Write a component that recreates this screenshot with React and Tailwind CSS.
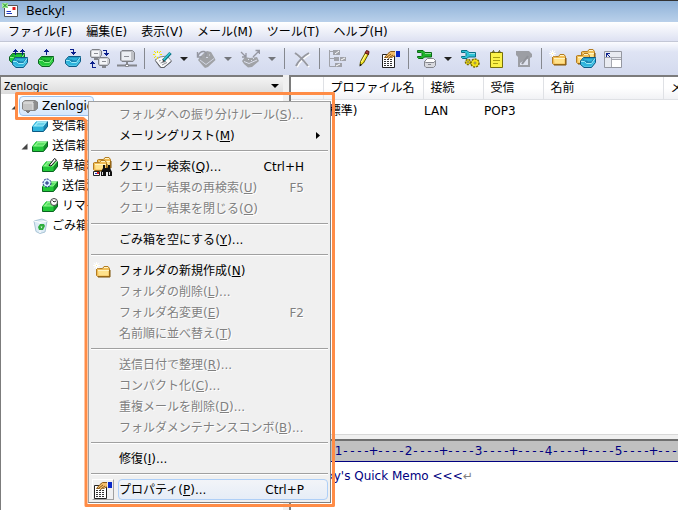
import { useState } from 'react'
import clsx from 'clsx'

const menuBar = [
  ['ファイル', 'F'],
  ['編集', 'E'],
  ['表示', 'V'],
  ['メール', 'M'],
  ['ツール', 'T'],
  ['ヘルプ', 'H'],
]

/* ================= アイコン部品 ================= */

const BLUE = { top: '#9ceaf8', mid: '#2fb4dc', in: '#1a83b0', dark: '#0c5a86' }
const GREEN = { top: '#8af58a', mid: '#22c83a', in: '#14912a', dark: '#0a6420' }

function Svg({ size = 20, children }) {
  return (
    <svg width={size} height={size} viewBox={`0 0 ${size} ${size}`} aria-hidden="true">
      {children}
    </svg>
  )
}

// 口の開いたトレイ
function Tray({ x = 0, y = 0, c }) {
  return (
    <g transform={`translate(${x} ${y})`}>
      <path d="M3.5.5H15.5V5.5L11.5 10.5H4L.5 7.5V4Z" fill={c.mid} stroke={c.dark} />
      <path d="M4 1.5H14.5L11.5 6H6.5L5 4.5H2Z" fill={c.in} />
      <path d="M4.5 2H13L11.5 4.5H8L7 3.5H3.5Z" fill={c.mid} />
      <path d="M1 4.5H4.5L6.5 6.5H11.5L15 1.5" fill="none" stroke={c.top} />
      <path d="M1.5 7 4.5 9.5H11L14.5 5" fill="none" stroke={c.top} opacity=".35" />
    </g>
  )
}

// 閉じた箱 (ツリー用)
function Box({ c, children }) {
  return (
    <Svg size={16}>
      <path d="M4.5 3.5H15.5V8.5L11.5 13.5H.5V8.5Z" fill={c.mid} />
      <path d="M5 4H15L11.5 8.5H1Z" fill={c.top} />
      <path d="M6 5H13L11 7.5H4Z" fill={c.mid} opacity=".45" />
      <path d="M11.5 8.5 15.5 3.5V8.5L11.5 13.5Z" fill={c.in} />
      <path d="M.5 8.5V13.5H11.5L15.5 8.5V3.5" fill="none" stroke={c.dark} />
      <path d="M4.5 3.5 .5 8.5" stroke={c.mid} />
      {children}
    </Svg>
  )
}

function ArrowUp({ x, y }) {
  return <path transform={`translate(${x} ${y})`} d="M2 0H3V1H4V2H5V3H3V6H2V3H0V2H1V1H2Z" fill="#0a1f8c" />
}

function ArrowIn({ x, y }) {
  return <path transform={`translate(${x} ${y})`} d="M0 0H4V3H6V4H5V5H4V6H3V5H2V4H1V3H3V1H0Z" fill="#0a1f8c" />
}

function Computer({ x = 0, y = 0 }) {
  return (
    <g transform={`translate(${x} ${y})`}>
      <path d="M2 .5H9.5L11.5 2V6L9.5 8.5H1.5L.5 7V2Z" fill="#cfd1d6" stroke="#7f8187" />
      <path d="M2 2H9V7H2Z" fill="#f4f5f8" />
      <path d="M4 4.5H8" stroke="#8b8d94" />
      <path d="M4 9H8V11H4Z" fill="#85878e" />
    </g>
  )
}

function Sparkle({ x = 0, y = 0, fill = '#fff' }) {
  return (
    <path
      transform={`translate(${x} ${y})`}
      d="M3 0H4V2.3L6 .6 6.5 1.1 4.8 3H7V4H4.8L6.5 6 6 6.5 4 4.8V7H3V4.8L1 6.5.5 6 2.3 4H0V3H2.3L.5 1.1 1 .6 3 2.3Z"
      fill={fill}
    />
  )
}

function Folder({ x = 0, y = 0 }) {
  return (
    <g transform={`translate(${x} ${y})`}>
      <path d="M.5 9.5V3L1.5 2.5H6.5L8 .5H12L13.5 2.5V10.5H1.5Z" fill="#f0bd55" stroke="#b37c22" />
      <path d="M2 4.5H12.5V9.5H2.5Z" fill="#ffe28c" />
      <path d="M2 4.5H13M8 1.5H12" stroke="#fff4c4" />
      <path d="M14 4V11H2" fill="none" stroke="#7d5208" />
    </g>
  )
}

function NewFolderIcon() {
  return (
    <Svg>
      <Folder x={3} y={5} />
      <Sparkle x={0} y={1} />
      <path d="M3 4H4V5H3Z" fill="#fff3a0" />
    </Svg>
  )
}

function WriteIcon() {
  return (
    <Svg>
      <path d="M3 11 8 8 15 7 19.5 12 12 18.5 8 18.5Z" fill="#fafafa" stroke="#85878c" />
      <path d="M4 12.5 9 18.5H12L19.5 12.5" fill="none" stroke="#606268" />
      <path d="M7 12 8.5 11.5M8.5 14 14 12.5M10 16 15 13.5M10 10.5 12 10" stroke="#8d8f96" />
      <path d="M11.5 11.5 18.5 4" stroke="#06707f" strokeWidth="3.2" />
      <path d="M11.5 11 18 4" stroke="#35cbd8" strokeWidth="1.4" />
      <path d="M11 10.5 13 12.5 10.5 13Z" fill="#333" />
      <path d="M5 2H6V4H5ZM5 8H6V10H5ZM1 5H3V6H1ZM8 5H10V6H8ZM2 2H3V3H2ZM3 3H4V4H3ZM8 2H9V3H8ZM7 3H8V4H7ZM2 8H3V9H2ZM3 7H4V8H3Z" fill="#f5e800" />
      <path d="M4 4H7V7H4Z" fill="#ffffc8" />
    </Svg>
  )
}

function ReplyGrayIcon() {
  return (
    <Svg>
      <path d="M8 4 11 2 15 3 18 8 19.5 11 12 18 9 19 7 17 2 11 4 8Z" fill="#a0a2a6" />
      <path d="M1.5 3V8H6M2 7Q4 2 8 2.5 12 4 9 7.5" fill="none" stroke="#9496a0" strokeWidth="1.4" />
      <path d="M4 11 10 15.5 18 9.5M10 8.5H12M13 6H14" fill="none" stroke="#d3d7e4" />
    </Svg>
  )
}

function ForwardGrayIcon() {
  return (
    <Svg>
      <path d="M2 12 5 8 10 9 17 8 19 12 12 18 8 18.5 4 15Z" fill="#a0a2a6" />
      <path d="M1 3 6 8M6 4V8H2M13 8 19 2M15.5 1.5H19.5V5" fill="none" stroke="#9496a0" strokeWidth="1.3" />
      <path d="M4 12.5 9 14.5 17 11M8 10.5H9M11 11.5H12M13 9.5H14" fill="none" stroke="#dde1ee" />
    </Svg>
  )
}

function PropertiesIcon() {
  return (
    <Svg>
      <path d="M1.5 5.5H13.5V18.5H1.5Z" fill="#fff" stroke="#222" />
      <path d="M3 10.5H12M3 12.5H12M3 14.5H12M3 16.5H12" stroke="#333" strokeDasharray="2 1" />
      <path d="M3.5 8.5 7 4.5 9.5 2.5 15 2.5V6.5L12 7.5 10.5 9 9.5 8 7.5 9.5 6.5 8.5Z" fill="#f3bd6a" stroke="#8a5a18" />
      <path d="M6 8 10 5M8.5 8.5 12 6" stroke="#8a5a18" />
      <path d="M15 2H19V8H15Z" fill="#0828c8" />
      <path d="M14.5 2V7" stroke="#e8e8e8" />
    </Svg>
  )
}

function Wrench({ fill, dark }) {
  return (
    <g>
      <path d="M1.5 1.5H7L9 3.5H15.5V8H8.5L7 9.5H2.5L1.5 8.5V7.5H5L6 6.5V4.5L5 3.5H1.5Z" fill={fill} stroke={dark} />
      <path d="M9 4.5H15" stroke="#fff" opacity=".5" />
    </g>
  )
}

function Drum() {
  return (
    <g>
      <path d="M8.5 12.5V17L10 18.5H17.5L19.5 16.5V11.5Z" fill="#d8d9de" stroke="#85878e" />
      <path d="M8.5 12.5 11.5 9.5H17.5L19.5 11.5 18 13.5H10Z" fill="#fff" stroke="#85878e" />
      <path d="M12 15.5H15" stroke="#85878e" />
    </g>
  )
}

function Gear({ cx, cy, r }) {
  return (
    <g>
      <circle cx={cx} cy={cy} r={r} fill="#f5e31c" stroke="#7a6c00" strokeWidth="1.5" strokeDasharray="2 1" />
      <circle cx={cx} cy={cy} r={r - 1} fill="#f5e31c" />
      <circle cx={cx} cy={cy} r="1" fill="#fff" stroke="#7a6c00" strokeWidth=".8" />
    </g>
  )
}

function QuerySearchIcon() {
  return (
    <Svg>
      <Folder x={4} y={0} />
      <Folder x={0} y={3} />
      <path d="M.5 14.5H6.5V18.5H.5Z" fill="#fff" stroke="#222" />
      <path d="M2 16.5H4" stroke="#1530c8" />
      <path d="M4 15H6V17H4Z" fill="#e02020" />
      <path d="M10 8H12V11H15V8H17V11L19 15V19H15V15H13V19H8V15L10 11Z" fill="#111" />
      <path d="M9.5 15V18M16.5 15V18" stroke="#ddd" />
    </Svg>
  )
}

/* ================= ツールバー ================= */

const tools = [
  {
    name: '送受信',
    icon: (
      <Svg>
        <Tray x={0} y={4} c={GREEN} />
        <Tray x={3} y={8} c={BLUE} />
        <ArrowUp x={4} y={0} />
        <ArrowUp x={11} y={0} />
      </Svg>
    ),
  },
  {
    name: '送信',
    icon: (
      <Svg>
        <Tray x={2} y={7} c={GREEN} />
        <ArrowUp x={8} y={0} />
      </Svg>
    ),
  },
  {
    name: '受信',
    icon: (
      <Svg>
        <Tray x={2} y={7} c={BLUE} />
        <ArrowIn x={7} y={0} />
      </Svg>
    ),
  },
  {
    name: '全受信',
    icon: (
      <Svg>
        <Computer x={0} y={0} />
        <Computer x={8} y={8} />
        <ArrowIn x={13} y={1} />
        <path d="M3 13H4V14H5V15H3V18H6V19H2V15H0V14H1V13H2V12H3Z" fill="#0a1f8c" />
      </Svg>
    ),
  },
  {
    name: '接続',
    icon: (
      <Svg>
        <path d="M5 1.5H15.5L17.5 3.5V10.5L16 12.5H5L3.5 11V3Z" fill="#bfc1c6" stroke="#808288" />
        <path d="M5 3H14V11H5Z" fill="#eceef2" />
        <path d="M7 7.5H12" stroke="#8b8d94" />
        <path d="M10 13V15M0 16.5H20" stroke="#84868c" strokeWidth="2" />
        <path d="M8.5 15.5H11.5V17.5H8.5Z" fill="#fff" stroke="#84868c" />
      </Svg>
    ),
  },
  'sep',
  { name: '新規作成', icon: <WriteIcon />, drop: 'on' },
  { name: '返信', icon: <ReplyGrayIcon />, drop: 'off' },
  { name: '転送', icon: <ForwardGrayIcon />, drop: 'off' },
  'sep',
  {
    name: '削除',
    icon: (
      <Svg>
        <path d="M3 4Q9 8 16 17M17 4Q8 9 4 17" fill="none" stroke="#fff" strokeWidth="2" transform="translate(1 1)" />
        <path d="M3 4Q9 8 16 17M17 4Q8 9 4 17" fill="none" stroke="#9799a1" strokeWidth="2" />
      </Svg>
    ),
  },
  'sep',
  {
    name: 'スレッド',
    icon: (
      <Svg>
        <path d="M2.5 1V17.5H9M2.5 9.5H8M2.5 2.5H6" fill="none" stroke="#a0a2a9" />
        <path d="M6 1H13V6H6ZM7 8H12V12H7ZM13 8H19V12H13ZM8 14H15V18H8Z" fill="#a0a2a9" />
        <path d="M8 5 12 2M14 11 18 9M9 17 13 15" stroke="#fff" />
      </Svg>
    ),
  },
  {
    name: '編集',
    icon: (
      <Svg>
        <path d="M6 16.5 6.5 12.5 11.5 3.5 14.5 5 9.5 14Z" fill="#f5e620" stroke="#5c5400" />
        <path d="M11 4 12.5 1.5 15 2.5 14.5 5.5Z" fill="#b04040" stroke="#5a1010" />
        <path d="M7.5 13 12 5" stroke="#fffbb0" />
        <path d="M5.5 17.5 6 15 8 16Z" fill="#111" />
      </Svg>
    ),
  },
  { name: 'プロパティ', icon: <PropertiesIcon /> },
  'sep',
  {
    name: 'メールボックスの設定',
    drop: 'on',
    icon: (
      <Svg>
        <Wrench fill="#1fb52c" dark="#0b6b16" />
        <Drum />
      </Svg>
    ),
  },
  {
    name: '全般的な設定',
    icon: (
      <Svg>
        <Wrench fill="#2fc3d6" dark="#0b6f86" />
        <Gear cx={8} cy={13} r={2.5} />
        <Gear cx={15} cy={14} r={4} />
      </Svg>
    ),
  },
  {
    name: 'メモ',
    icon: (
      <Svg>
        <path d="M3.5 3.5H15.5V18.5H3.5Z" fill="#fbf24a" stroke="#77700a" />
        <path d="M6 8.5H13M6 11.5H13M6 14.5H11" stroke="#a89f10" />
        <path d="M5 4 6.5 1.5 7.5 4M11 4 12.5 1.5 13.5 4" fill="none" stroke="#55521a" />
      </Svg>
    ),
  },
  {
    name: 'メモの編集',
    icon: (
      <Svg>
        <path d="M2 2H15L18 5V8L16 9V18H4V8L2 6Z" fill="#9c9ea4" />
        <path d="M6 16V14L13 10H14V16Z" fill="#dfe3ef" />
        <path d="M8 15 14 7" stroke="#909299" strokeWidth="2" />
      </Svg>
    ),
  },
  'sep',
  { name: '新規フォルダ', icon: <NewFolderIcon /> },
  {
    name: 'フォルダの受信箱',
    icon: (
      <Svg>
        <Folder x={5} y={0} />
        <Folder x={0} y={4} />
        <Tray x={4} y={8} c={BLUE} />
      </Svg>
    ),
  },
  {
    name: 'ウィンドウ',
    icon: (
      <Svg>
        <path d="M1.5 2.5H18.5V18.5H1.5Z" fill="#e9ebf1" stroke="#9497a0" />
        <path d="M2 8.5H18M8.5 9V18" stroke="#a6a8b0" />
        <path d="M9 11H18V18H9Z" fill="#fff" />
        <path d="M9 10.5H18" stroke="#a6a8b0" />
        <path d="M3 4H7V5H5V6H6V7H7V8H6V7H5V6H4V8H3Z" fill="#0a1f8c" />
      </Svg>
    ),
  },
]

function ToolBar() {
  return (
    <div role="toolbar" className="flex h-[33px] shrink-0 items-center overflow-hidden bg-linear-to-b from-[#fbfcff] via-[#dfe4f4] via-30% to-[#d3daee] pl-[5px]">
      {tools.map((t, i) =>
        t === 'sep' ? (
          <div key={i} className="flex w-2 shrink-0 justify-center">
            <div className="h-[21px] w-px bg-[#85888f]" />
          </div>
        ) : (
          <div key={i} className="flex shrink-0">
            <button type="button" aria-label={t.name} disabled={t.drop === 'off'} className="flex h-6 w-[27px] items-center justify-center">
              {t.icon}
            </button>
            {t.drop && (
              <button type="button" aria-label={`${t.name}のメニュー`} disabled={t.drop === 'off'} className="flex w-[17px] items-center justify-center">
                <svg width="8" height="4" viewBox="0 0 8 4" aria-hidden="true">
                  <path d="M0 0H8L4 4Z" fill={t.drop === 'on' ? '#222' : '#74767c'} />
                </svg>
              </button>
            )}
          </div>
        )
      )}
    </div>
  )
}

/* ================= フォルダツリー ================= */

const folders = [
  {
    name: 'Zenlogic',
    level: 0,
    open: true,
    icon: (
      <Svg size={16}>
        <path d="M3 2.5H13L15.5 4V10.5L13 12.5H2.5L.5 11V4.5Z" fill="#8e8e8e" stroke="#858585" />
        <path d="M1 4.5 3 3H12L11 4.5V12H2L1 11Z" fill="#c4c4c4" />
        <path d="M1.5 5H11V12" fill="none" stroke="#e6e6e6" />
        <path d="M4 13H8V14H7V15H5V14H4Z" fill="#777" />
      </Svg>
    ),
  },
  { name: '受信箱', level: 1, icon: <Box c={BLUE} /> },
  { name: '送信箱', level: 1, open: true, icon: <Box c={GREEN} /> },
  {
    name: '草稿箱',
    level: 2,
    icon: (
      <Box c={GREEN}>
        <path d="M7 7.5 12.5 .5 14.5 2 9 8Z" fill="#fff" stroke="#111" />
      </Box>
    ),
  },
  {
    name: '送信済み',
    level: 2,
    icon: (
      <Box c={GREEN}>
        <circle cx="5" cy="5" r="4" fill="#d6f3ff" stroke="#12207c" strokeDasharray="2 1" />
        <path d="M3 5H7M5 3V7" stroke="#12207c" />
      </Box>
    ),
  },
  {
    name: 'リマインダ',
    level: 2,
    icon: (
      <Box c={GREEN}>
        <circle cx="12" cy="4" r="3.5" fill="#fff" stroke="#444" />
        <path d="M10.5 2.5 12 4 14 3" fill="none" stroke="#222" />
      </Box>
    ),
  },
  {
    name: 'ごみ箱',
    level: 1,
    icon: (
      <Svg size={16}>
        <path d="M2 3 10 1 15 3 13 14 8 15.5 4 13.5Z" fill="#dcebf5" stroke="#a9c4d6" />
        <path d="M2 3 8 4.5 15 3M8 4.5V15" fill="none" stroke="#fff" />
        <path d="M8 6H12L13 8 11 12H7L6 9Z" fill="#2fae3f" />
        <path d="M8.5 8.5H10.5L9.5 10.5Z" fill="#e7f7ea" />
      </Svg>
    ),
  },
]

function FolderTree() {
  return (
    <ul role="tree" className="flex-1 overflow-hidden bg-white py-0.5">
      {folders.map(f => (
        <li
          key={f.name}
          role="treeitem"
          aria-selected={f.level === 0}
          className={clsx('flex h-5 items-center', f.level === 0 && 'pl-2', f.level === 1 && 'pl-[18px]', f.level === 2 && 'pl-7')}
        >
          <span className="w-2.5 shrink-0">
            {f.open && (
              <svg width="7" height="7" viewBox="0 0 7 7" className="ml-0.5" aria-hidden="true">
                <path d="M6.5.5V6.5H.5Z" fill="#444" />
              </svg>
            )}
          </span>
          <span
            className={clsx(
              'flex h-5 items-center gap-1 whitespace-nowrap border pl-0.5',
              f.level === 0 ? 'rounded-sm border-[#9cc3ee] bg-linear-to-b from-[#f2f8ff] to-[#d5e7fb]' : 'border-transparent'
            )}
          >
            {f.icon}
            {f.name}
          </span>
        </li>
      ))}
    </ul>
  )
}

/* ================= 右ペイン ================= */

function ProfileTable() {
  const columns = [
    ['', 'w-8'],
    ['プロファイル名', 'w-[100px]'],
    ['接続', 'w-[60px]'],
    ['受信', 'w-[60px]'],
    ['名前', 'w-[120px]'],
    ['メールアドレス', 'w-[160px]'],
  ]
  return (
    <div className="flex-1 overflow-hidden border-b border-[#d8d8d8] bg-white">
      <table className="w-[532px] table-fixed text-left whitespace-nowrap">
        <thead>
          <tr className="h-[22px] bg-linear-to-b from-white from-50% to-[#f1f2f5]">
            {columns.map(([label, width]) => (
              <th key={width + label} scope="col" className={clsx(width, 'border-r border-b border-[#dfe1e5] pl-[7px] font-normal')}>
                {label}
              </th>
            ))}
          </tr>
        </thead>
        <tbody>
          <tr className="h-[23px]">
            <td />
            <td className="pl-px">(標準)</td>
            <td className="pl-px">LAN</td>
            <td className="pl-px">POP3</td>
            <td />
            <td />
          </tr>
        </tbody>
      </table>
    </div>
  )
}

function QuickMemo() {
  return (
    <div className="shrink-0 border-t-2 border-[#6f6f6f] bg-white text-[#000080]">
      <div className="flex h-[21px] items-center overflow-hidden border-b border-[#000080] bg-[#c0c0c0] pl-11">
        {[1, 2, 3, 4, 5].map(n => (
          <div key={n} className="flex w-[70px] shrink-0">
            {`${n}----+----`.split('').map((ch, i) => (
              <span key={i} className="flex w-[7px] justify-center">
                {ch}
              </span>
            ))}
          </div>
        ))}
      </div>
      <div className="h-12 pt-1 pl-3.5 leading-5">
        Becky's Quick Memo &lt;&lt;&lt;<span className="text-[#808080]">↵</span>
      </div>
    </div>
  )
}

/* ================= コンテキストメニュー ================= */

const contextMenu = [
  [
    { text: 'フォルダへの振り分けルール', k: 'S', dots: true, off: true },
    { text: 'メーリングリスト', k: 'M', sub: true },
  ],
  [
    { text: 'クエリー検索', k: 'Q', dots: true, key: 'Ctrl+H', icon: <QuerySearchIcon /> },
    { text: 'クエリー結果の再検索', k: 'U', key: 'F5', off: true },
    { text: 'クエリー結果を閉じる', k: 'O', off: true },
  ],
  [{ text: 'ごみ箱を空にする', k: 'Y', dots: true }],
  [
    { text: 'フォルダの新規作成', k: 'N', icon: <NewFolderIcon /> },
    { text: 'フォルダの削除', k: 'L', dots: true, off: true },
    { text: 'フォルダ名変更', k: 'E', key: 'F2', off: true },
    { text: '名前順に並べ替え', k: 'T', off: true },
  ],
  [
    { text: '送信日付で整理', k: 'R', dots: true, off: true },
    { text: 'コンパクト化', k: 'C', dots: true, off: true },
    { text: '重複メールを削除', k: 'D', dots: true, off: true },
    { text: 'フォルダメンテナンスコンボ', k: 'B', dots: true, off: true },
  ],
  [{ text: '修復', k: 'I', dots: true }],
  [{ text: 'プロパティ', k: 'P', dots: true, key: 'Ctrl+P', icon: <PropertiesIcon />, active: true }],
]

function MenuItem({ item }) {
  return (
    <button
      type="button"
      role="menuitem"
      disabled={item.off}
      className={clsx('flex h-[21px] w-full items-center whitespace-nowrap', item.off ? 'text-[#808080] [text-shadow:1px_1px_0_#fff]' : 'text-black')}
    >
      <span
        className={clsx(
          'mr-1 ml-px flex h-[21px] w-[22px] shrink-0 items-center justify-center border',
          item.active ? 'border-t-white border-r-[#a0a0a0] border-b-[#a0a0a0] border-l-white' : 'border-transparent'
        )}
      >
        {item.icon}
      </span>
      <span
        className={clsx(
          'flex h-full flex-1 items-center rounded-sm border pr-[23px]',
          item.active ? 'border-[#aecff7] bg-linear-to-b from-[#f2f4f8] to-[#e6edf7]' : 'border-transparent'
        )}
      >
        <span>
          {item.text}(<u>{item.k}</u>){item.dots && '...'}
        </span>
        {item.key && <span className="ml-auto">{item.key}</span>}
        {item.sub && (
          <svg width="4" height="7" viewBox="0 0 4 7" className="-mr-4 ml-auto" aria-hidden="true">
            <path d="M0 0 4 3.5 0 7Z" fill="#000" />
          </svg>
        )}
      </span>
    </button>
  )
}

function ContextMenu() {
  return (
    <div role="menu" className="absolute top-[101px] left-[88px] w-[243px] border border-t-[#a0a0a0] border-r-[#808080] border-b-[#808080] border-l-[#a0a0a0] bg-[#f0f0f0] p-0.5">
      {contextMenu.map((group, i) => (
        <div key={i} role="group">
          {i > 0 && (
            <div role="separator" className="flex h-2.5 items-center">
              <div className="h-0.5 w-full border-t border-b border-t-[#a0a0a0] border-b-white" />
            </div>
          )}
          {group.map(item => (
            <MenuItem key={item.k} item={item} />
          ))}
        </div>
      ))}
    </div>
  )
}

// 選択フォルダとメニューを囲む枠
function Highlight() {
  return (
    <svg className="pointer-events-none absolute top-[92px] left-[15px]" width="320" height="415" viewBox="0 0 320 415" aria-hidden="true">
      <path d="M1.5 1.5H318.5V413.5H71V29L68 26.5H1.5Z" fill="none" stroke="#ff8c46" strokeWidth="3" strokeLinejoin="round" />
    </svg>
  )
}

export default function App() {
  const [mailbox, setMailbox] = useState('Zenlogic')

  return (
    <div className="relative flex h-screen flex-col overflow-hidden bg-[#f0f0f0] font-['DejaVu_Sans','Noto_Sans_CJK_JP',sans-serif] text-xs leading-5 text-black">
      <header className="flex h-[22px] shrink-0 items-center gap-2 border-t border-[#333] bg-linear-to-b from-[#8fb2d8] to-[#b9d0ea] pb-1 pl-0.5">
        <Svg size={16}>
          <path d="M2.5 3.5H15.5V14.5H2.5Z" fill="#fff" stroke="#555" />
          <path d="M10.5 5H13.5V8H10.5Z" fill="#e01818" />
          <path d="M4.5 9.5H9M4.5 11.5H10" stroke="#2038c0" />
          <path d="M0 1H6V6H0Z" fill="#a8eca0" />
          <path d="M1 1.5 5 5.5M5 1.5 1 5.5" stroke="#16901c" />
        </Svg>
        <h1 className="font-['Noto_Sans',sans-serif] text-[13px] leading-4">Becky!</h1>
      </header>

      <nav className="flex h-5 shrink-0 items-center border-b border-[#c3c7d6] bg-linear-to-b from-white to-[#dde1f2] pl-px">
        {menuBar.map(([label, k]) => (
          <button key={k} type="button" className="shrink-0 px-[7px] whitespace-nowrap">
            {label}({k})
          </button>
        ))}
      </nav>

      <ToolBar />

      <main className="flex min-h-0 flex-1 gap-1.5">
        <div className="flex w-[283px] shrink-0 flex-col border-t-2 border-l border-[#7c7c7c]">
          <div className="relative">
            <select
              aria-label="メールボックス"
              value={mailbox}
              onChange={e => setMailbox(e.target.value)}
              className="block h-[17px] w-full appearance-none bg-linear-to-b from-[#f4f4f4] to-[#dcdcdc] pl-[3px] font-['Noto_Sans',sans-serif] text-[11px] leading-4"
            >
              <option>Zenlogic</option>
            </select>
            <svg width="8" height="4" viewBox="0 0 8 4" className="pointer-events-none absolute top-[7px] right-1" aria-hidden="true">
              <path d="M0 0H8L4 4Z" fill="#000" />
            </svg>
          </div>
          <FolderTree />
        </div>

        <div className="flex min-w-0 flex-1 flex-col gap-1">
          <div className="flex flex-1 flex-col border-t-2 border-l-2 border-[#7c7c7c]">
            <ProfileTable />
          </div>
          <div className="border-l-2 border-[#7c7c7c]">
            <QuickMemo />
          </div>
        </div>
      </main>

      <Highlight />
      <ContextMenu />
    </div>
  )
}
